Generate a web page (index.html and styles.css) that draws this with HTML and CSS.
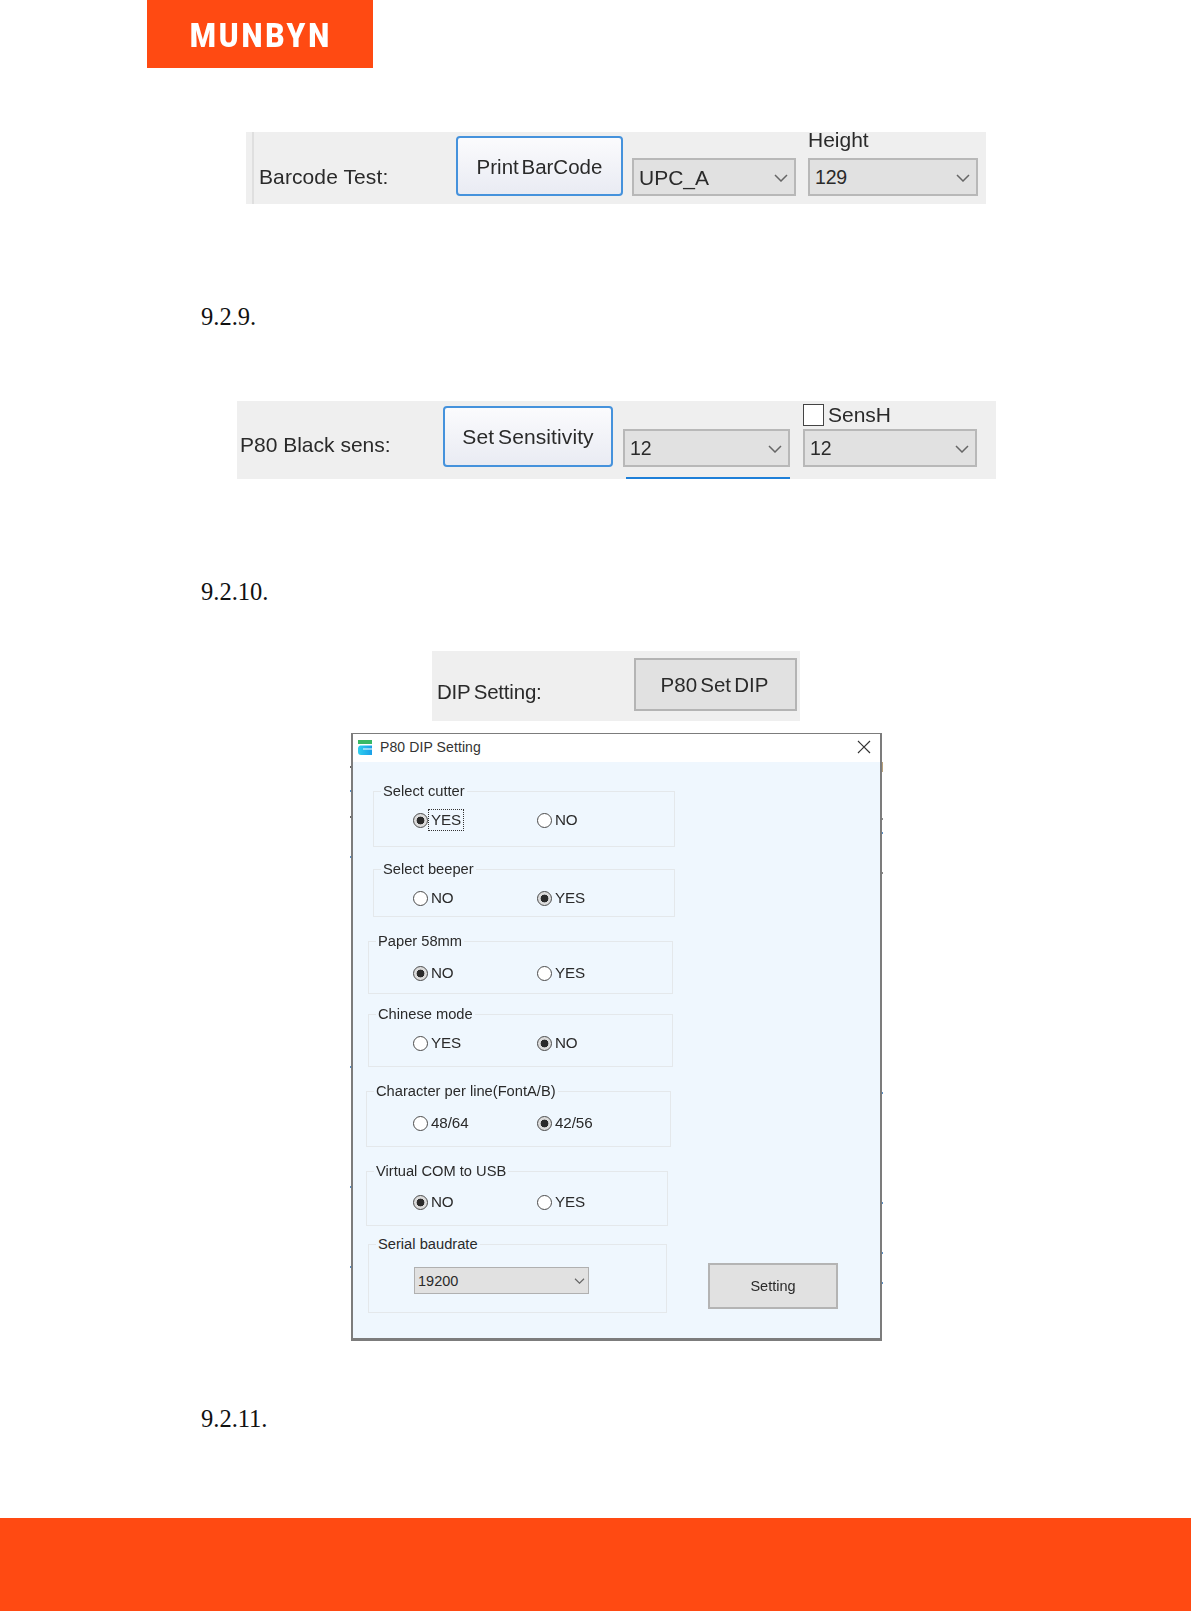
FILE: index.html
```html
<!DOCTYPE html>
<html lang="en">
<head>
<meta charset="utf-8">
<title>MUNBYN P80 manual</title>
<link rel="stylesheet" href="styles.css">
</head>
<body>
<div class="page">
  <header class="logo"><span class="logo-text">MUNBYN</span></header>

  <section class="panel panel-barcode">
    <div class="band"></div>
    <div class="panel-label label-barcode">Barcode Test:</div>
    <div class="btn btn-blue btn-print">Print BarCode</div>
    <div class="select sel-upc">UPC_A<svg class="chev" viewBox="0 0 14 8"><path d="M1 1l6 6 6-6"/></svg></div>
    <div class="stack stack-height">
      <div class="stack-title">Height</div>
      <div class="select sel-height"><span class="num">129</span><svg class="chev" viewBox="0 0 14 8"><path d="M1 1l6 6 6-6"/></svg></div>
    </div>
  </section>

  <p class="heading h-929">9.2.9.</p>

  <section class="panel panel-sens">
    <div class="panel-label label-sens">P80 Black sens:</div>
    <div class="btn btn-blue btn-sens">Set Sensitivity</div>
    <div class="select sel-sens"><span class="num">12</span><svg class="chev" viewBox="0 0 14 8"><path d="M1 1l6 6 6-6"/></svg></div>
    <div class="stack stack-sensh">
      <div class="check-row"><span class="check"></span><span>SensH</span></div>
      <div class="select sel-sensh"><span class="num">12</span><svg class="chev" viewBox="0 0 14 8"><path d="M1 1l6 6 6-6"/></svg></div>
    </div>
    <div class="focus-line"></div>
  </section>

  <p class="heading h-9210">9.2.10.</p>

  <section class="panel panel-dip">
    <div class="panel-label label-dip">DIP Setting:</div>
    <div class="btn btn-gray btn-dip">P80 Set DIP</div>
  </section>

  <section class="dialog">
    <div class="titlebar">
      <svg class="app-icon" viewBox="0 0 14 15">
        <defs><linearGradient id="appBlue" x1="0" y1="0" x2="1" y2="0"><stop offset="0" stop-color="#2fd0ee"/><stop offset="1" stop-color="#1b9fe8"/></linearGradient></defs>
        <rect x="0" y="0" width="14" height="4" fill="#38b964"/>
        <path d="M2 5.5h12v3H5v1h9V15H3a3 3 0 0 1-3-3V8a3 3 0 0 1 2-2.500z" fill="url(#appBlue)"/>
      </svg>
      <span class="title-text">P80 DIP Setting</span>
      <svg class="close-icon" viewBox="0 0 14 14"><path d="M1 1l12 12M13 1L1 13"/></svg>
    </div>
    <div class="dialog-body">
      <div class="groups">
        <div class="group g1">
          <span class="legend">Select cutter</span>
          <div class="radios">
            <label class="radio"><span class="dot on"></span><span class="rtext focus">YES</span></label>
            <label class="radio"><span class="dot"></span><span class="rtext">NO</span></label>
          </div>
        </div>
        <div class="group g2">
          <span class="legend">Select beeper</span>
          <div class="radios">
            <label class="radio"><span class="dot"></span><span class="rtext">NO</span></label>
            <label class="radio"><span class="dot on"></span><span class="rtext">YES</span></label>
          </div>
        </div>
        <div class="group g3">
          <span class="legend">Paper 58mm</span>
          <div class="radios">
            <label class="radio"><span class="dot on"></span><span class="rtext">NO</span></label>
            <label class="radio"><span class="dot"></span><span class="rtext">YES</span></label>
          </div>
        </div>
        <div class="group g4">
          <span class="legend">Chinese mode</span>
          <div class="radios">
            <label class="radio"><span class="dot"></span><span class="rtext">YES</span></label>
            <label class="radio"><span class="dot on"></span><span class="rtext">NO</span></label>
          </div>
        </div>
        <div class="group g5">
          <span class="legend">Character per line(FontA/B)</span>
          <div class="radios">
            <label class="radio"><span class="dot"></span><span class="rtext">48/64</span></label>
            <label class="radio"><span class="dot on"></span><span class="rtext">42/56</span></label>
          </div>
        </div>
        <div class="group g6">
          <span class="legend">Virtual COM to USB</span>
          <div class="radios">
            <label class="radio"><span class="dot on"></span><span class="rtext">NO</span></label>
            <label class="radio"><span class="dot"></span><span class="rtext">YES</span></label>
          </div>
        </div>
        <div class="group g7">
          <span class="legend">Serial baudrate</span>
          <div class="combo">19200<svg class="chev chev-small" viewBox="0 0 14 8"><path d="M1 1l6 6 6-6"/></svg></div>
        </div>
      </div>
      <div class="btn btn-gray btn-setting">Setting</div>
    </div>
  </section>

  <p class="heading h-9211">9.2.11.</p>

  <footer class="footer"></footer>
</div>
</body>
</html>
```
FILE: styles.css
```css
* { box-sizing: border-box; }
html, body { margin: 0; padding: 0; background: #fff; }
.page {
  width: 1191px;
  height: 1611px;
  display: flex;
  flex-direction: column;
  align-items: flex-start;
  font-family: "Liberation Sans", Arial, sans-serif;
  color: #2a2a2a;
  overflow: hidden;
}

/* logo + footer */
.logo {
  margin-left: 147px;
  width: 226px;
  height: 68px;
  background: #ff4a12;
  display: flex;
  align-items: center;
  justify-content: center;
  flex: none;
}
.logo-text {
  font-family: Roboto, "Liberation Sans", sans-serif;
  font-weight: 900;
  font-size: 34px;
  line-height: 34px;
  letter-spacing: 3.2px;
  color: #fff;
  display: inline-block;
  transform: scaleX(.88);
  margin: 1px 0 0 2px;
}
.footer {
  margin-top: auto;
  width: 100%;
  height: 93px;
  background: #ff4a12;
  flex: none;
}

/* numbered headings */
.heading {
  margin: 0 0 0 201px;
  font-family: "Liberation Serif", "Times New Roman", serif;
  font-size: 24.5px;
  line-height: 28px;
  color: #111;
  flex: none;
}
.h-929 { margin-top: 99px; }
.h-9210 { margin-top: 99px; }
.h-9211 { margin-top: 64px; }

/* screenshot strips */
.panel {
  position: relative;
  display: flex;
  align-items: flex-end;
  background: #efefef;
  flex: none;
  filter: blur(.4px);
}
.panel-barcode { margin: 64px 0 0 246px; width: 740px; height: 72px; padding-bottom: 8px; }
.panel-sens { margin: 70px 0 0 237px; width: 759px; height: 78px; padding-bottom: 12px; }
.panel-dip { margin: 45px 0 0 432px; width: 368px; height: 70px; padding-bottom: 10px; }

.band {
  align-self: stretch;
  width: 8px;
  margin-bottom: -8px;
  border-right: 2px solid #dfdfdf;
  flex: none;
}
.panel-label { font-size: 21px; line-height: 24px; flex: none; white-space: nowrap; }
.label-barcode { width: 197px; margin-left: 5px; margin-bottom: 7px; letter-spacing: .1px; }
.label-sens { width: 203px; margin-left: 3px; margin-bottom: 10px; }
.label-dip { width: 197px; margin-left: 5px; margin-bottom: 7px; font-size: 20.5px; letter-spacing: -.2px; word-spacing: -2px; }

.btn {
  display: flex;
  align-items: center;
  justify-content: center;
  flex: none;
  white-space: nowrap;
  font-size: 21px;
}
.btn-blue {
  border: 2px solid #4592dc;
  border-radius: 4px;
  background: linear-gradient(#fbfbfd, #e9ebf3);
}
.btn-gray { background: #e1e1e1; border: 2px solid #b4b4b4; }
.btn-print { width: 167px; height: 60px; word-spacing: -3px; font-size: 20.5px; padding-top: 1px; }
.btn-sens { width: 170px; height: 61px; word-spacing: -2px; letter-spacing: .1px; }
.btn-dip { width: 163px; height: 53px; word-spacing: -2.5px; font-size: 20.5px; padding-right: 2px; }

.select {
  position: relative;
  display: flex;
  align-items: center;
  height: 38px;
  padding: 1px 0 0 5px;
  font-size: 21px;
  background: #e1e1e1;
  border: 2px solid #b8b8b8;
  flex: none;
}
.num { font-size: 19.5px; letter-spacing: -.2px; }
.sel-upc { width: 164px; margin-left: 9px; }
.sel-height { width: 170px; }
.sel-sens { width: 167px; margin-left: 10px; }
.sel-sensh { width: 174px; }
.chev {
  width: 14px;
  height: 8px;
  margin-left: auto;
  margin-right: 6px;
  fill: none;
  stroke: #666;
  stroke-width: 1.5;
}
.stack { display: flex; flex-direction: column; flex: none; }
.stack-height { margin-left: 12px; }
.stack-sensh { margin-left: 13px; }
.stack-title { font-size: 21px; line-height: 26px; margin-bottom: 5px; }
.check-row { display: flex; align-items: center; gap: 4px; font-size: 21px; line-height: 22px; margin-bottom: 3px; }
.check { width: 21px; height: 22px; background: #fff; border: 1.5px solid #444; flex: none; }
.focus-line { position: absolute; left: 389px; bottom: 0; width: 164px; height: 2px; background: #1e7fd8; }

/* dialog */
.dialog {
  position: relative;
  margin: 12px 0 0 351px;
  width: 531px;
  height: 608px;
  border-style: solid;
  border-color: #7c7c7c;
  border-width: 1px 2px 3px 2px;
  flex: none;
  display: flex;
  flex-direction: column;
  background: #eff7fe;
  filter: blur(.3px);
}
.dialog::before {
  content: "";
  position: absolute;
  right: -3px;
  top: 28px;
  width: 1px;
  height: 2px;
  background: #b9a27c;
  box-shadow: 0 2px #b9a27c, 0 4px #b9a27c, 0 6px #b9a27c, 0 8px #b9a27c, 0 56px #888, 0 70px #5a8fc5, 0 110px #888, 0 330px #5a8fc5, 0 440px #5a8fc5, 0 490px #5a8fc5, 0 520px #5a8fc5;
}
.dialog::after {
  content: "";
  position: absolute;
  left: -3px;
  top: 32px;
  width: 1px;
  height: 2px;
  background: #666;
  box-shadow: 0 24px #5a8fc5, 0 50px #666, 0 90px #5a8fc5, 0 300px #5a8fc5, 0 420px #5a8fc5, 0 500px #5a8fc5;
}
.titlebar {
  height: 28px;
  flex: none;
  background: #fff;
  display: flex;
  align-items: center;
  padding: 0 9px 2px 5px;
}
.app-icon { width: 14px; height: 15px; flex: none; }
.title-text { margin-left: 8px; font-size: 14px; letter-spacing: .1px; color: #333; }
.close-icon { width: 14px; height: 14px; margin-left: auto; fill: none; stroke: #333; stroke-width: 1.2; }

.dialog-body { flex: 1; display: flex; align-items: flex-end; }
.groups { width: 330px; flex: none; align-self: flex-start; padding-top: 29px; display: flex; flex-direction: column; }
.group {
  position: relative;
  border: 1.5px solid #e4e8eb;
  flex: none;
}
.g1 { width: 302px; height: 56px; margin-left: 20px; padding-top: 19px; }
.g2 { width: 302px; height: 48px; margin-left: 20px; margin-top: 22px; padding-top: 19px; }
.g3 { width: 305px; height: 53px; margin-left: 15px; margin-top: 24px; padding-top: 22px; }
.g4 { width: 305px; height: 53px; margin-left: 15px; margin-top: 20px; padding-top: 19px; }
.g5 { width: 305px; height: 56px; margin-left: 13px; margin-top: 24px; padding-top: 22px; }
.g6 { width: 302px; height: 55px; margin-left: 13px; margin-top: 24px; padding-top: 21px; }
.g7 { width: 299px; height: 69px; margin-left: 15px; margin-top: 18px; padding-top: 22px; }
.legend {
  position: absolute;
  top: -10px;
  left: 7px;
  padding: 0 2px;
  background: #eff7fe;
  font-size: 14.7px;
  line-height: 18px;
  white-space: nowrap;
}
.radios { display: grid; grid-template-columns: 124px 124px; height: 18px; }
.g1 .radios, .g2 .radios { margin-left: 39px; }
.g3 .radios, .g4 .radios { margin-left: 44px; }
.g5 .radios, .g6 .radios { margin-left: 46px; }
.radio { display: flex; align-items: center; font-size: 15.2px; line-height: 18px; }
.dot {
  width: 15px;
  height: 15px;
  border-radius: 50%;
  border: 1.5px solid #4a4a4a;
  background: #fff;
  margin-right: 2px;
  flex: none;
}
.dot.on { background: radial-gradient(circle, #2b2b2b 0 3.6px, #dcdcdc 4.2px); }
.rtext { padding: 0 1px; letter-spacing: -.1px; }
.focus { outline: 1px dotted #333; outline-offset: 1px; }
.combo {
  display: flex;
  align-items: center;
  width: 175px;
  height: 27px;
  margin-left: 45px;
  padding-left: 3px;
  font-size: 14.5px;
  background: #e1e1e1;
  border: 1.5px solid #b0b0b0;
}
.chev-small { width: 11px; height: 6px; margin-right: 3px; }
.btn-setting {
  width: 130px;
  height: 46px;
  margin: 0 0 29px 25px;
  font-size: 14.5px;
}
```
